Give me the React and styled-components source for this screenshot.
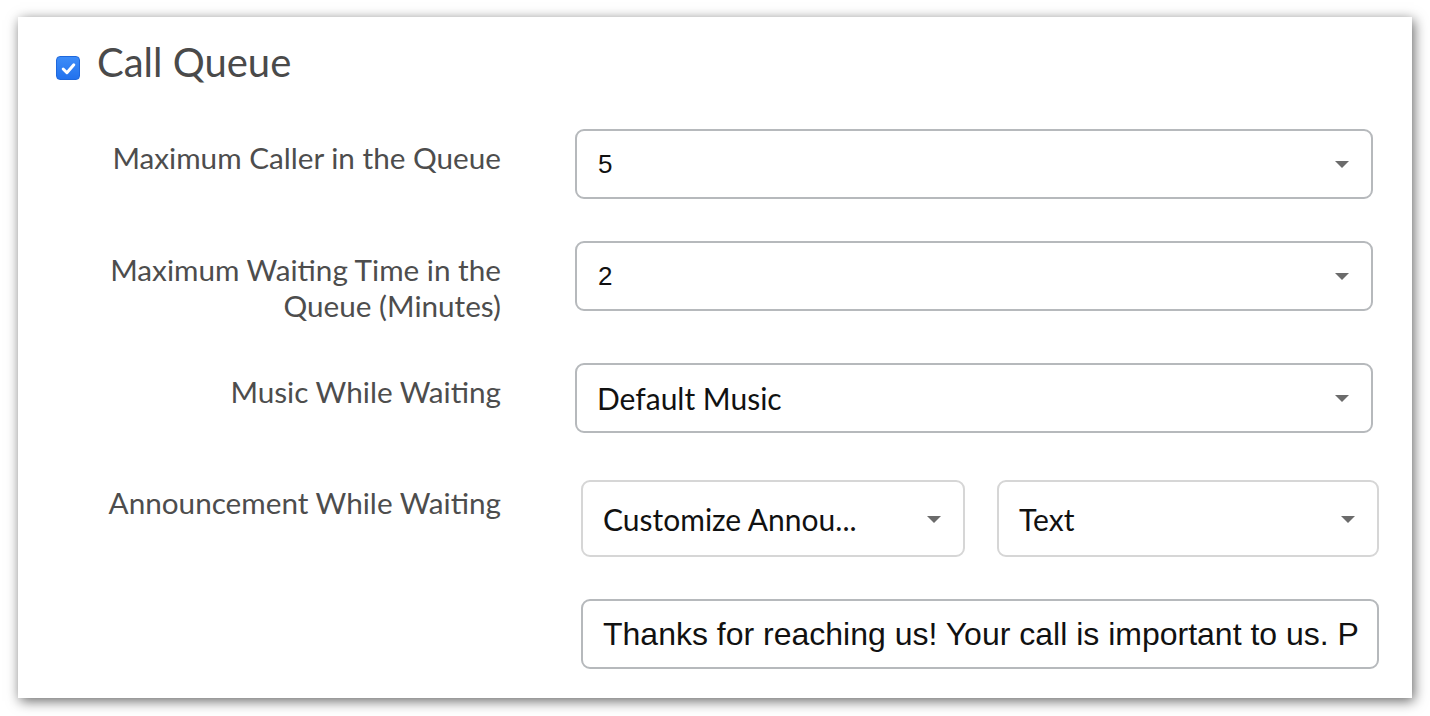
import React from "react";
import styled, { createGlobalStyle } from "styled-components";

const Global = createGlobalStyle`
  html, body { margin: 0; padding: 0; background: #ffffff; }
  body { font-family: Lato, "Open Sans", sans-serif; }
  * { box-sizing: border-box; }
`;

const Page = styled.div`
  width: 1430px;
  height: 716px;
  padding: 17px 18px 0 18px;
  background: #ffffff;
`;

const Card = styled.section`
  width: 1394px;
  height: 681px;
  background: #ffffff;
  box-shadow: 2px 3px 12px rgba(0, 0, 0, 0.6);
  padding: 21px 39px 0 38px;
`;

const TitleRow = styled.label`
  display: flex;
  align-items: flex-start;
  gap: 17px;
  height: 48px;
`;

const Check = styled.span`
  flex: none;
  width: 24px;
  height: 24px;
  border-radius: 4px;
  background: linear-gradient(#3d8cf8, #2272ee);
  border: 1px solid #1f68dc;
  display: flex;
  align-items: center;
  justify-content: center;
  margin-top: 18px;
`;

const Title = styled.h1`
  margin: 0;
  font-family: Lato, sans-serif;
  font-weight: 400;
  font-size: 40px;
  color: #4a4a4a;
  line-height: 48px;
`;

const Form = styled.div`
  display: flex;
  flex-direction: column;
  margin-top: 43px;
`;

const Row = styled.div`
  display: grid;
  grid-template-columns: 445px 798px;
  column-gap: 74px;
  margin-top: ${(p) => p.$gap || 0}px;
`;

const Label = styled.div`
  text-align: right;
  font-family: Lato, sans-serif;
  font-size: 29.7px;
  line-height: 36px;
  color: #4d4d4d;
  padding-top: ${(p) => p.$pt ?? 11}px;
`;

const Controls = styled.div`
  display: flex;
  flex-direction: column;
  gap: 42px;
  margin-left: ${(p) => p.$shift || 0}px;
  margin-right: ${(p) => -(p.$shift || 0)}px;
`;

const Pair = styled.div`
  display: grid;
  grid-template-columns: 384px 382px;
  column-gap: 32px;
`;

const Select = styled.div`
  position: relative;
  height: ${(p) => p.$h || 70}px;
  border: 2px solid ${(p) => (p.$light ? "#d6d6d6" : "#b6b9bc")};
  border-radius: 9px;
  background: #ffffff;
  display: flex;
  align-items: center;
  padding: 0 56px 0 ${(p) => p.$pl || 20}px;
  font-family: ${(p) => (p.$arial ? '"Liberation Sans", Arial, sans-serif' : "Lato, sans-serif")};
  font-size: ${(p) => (p.$arial ? 26 : 30)}px;
  color: #111111;
  white-space: nowrap;
  overflow: hidden;
`;

const Arrow = styled.span`
  position: absolute;
  right: 22px;
  top: 50%;
  margin-top: -3px;
  width: 0;
  height: 0;
  border-left: 7px solid transparent;
  border-right: 7px solid transparent;
  border-top: 7px solid #6b6b6b;
`;

const TextInput = styled.input`
  display: block;
  width: 100%;
  height: 70px;
  margin: 0;
  border: 2px solid #b6b9bc;
  border-radius: 9px;
  background: #ffffff;
  padding: 0 14px 0 20px;
  font-family: "Liberation Sans", Arial, sans-serif;
  font-size: 32px;
  color: #111111;
  outline: none;
`;

const Dropdown = ({ children, ...rest }) => (
  <Select {...rest}>
    {children}
    <Arrow />
  </Select>
);

export default function App() {
  return (
    <>
      <Global />
      <Page>
        <Card>
          <TitleRow>
            <Check>
              <svg width="17" height="17" viewBox="0 0 16 16">
                <path
                  d="M3 8.5 L6.5 12 L13 4.5"
                  fill="none"
                  stroke="#ffffff"
                  strokeWidth="2.8"
                  strokeLinecap="round"
                  strokeLinejoin="round"
                />
              </svg>
            </Check>
            <Title>Call Queue</Title>
          </TitleRow>
          <Form>
            <Row>
              <Label>Maximum Caller in the Queue</Label>
              <Controls>
                <Dropdown $arial $pl={21}>5</Dropdown>
              </Controls>
            </Row>
            <Row $gap={42}>
              <Label>
                Maximum Waiting Time in the
                <br />
                Queue (Minutes)
              </Label>
              <Controls>
                <Dropdown $arial $pl={21}>2</Dropdown>
              </Controls>
            </Row>
            <Row $gap={39}>
              <Label>Music While Waiting</Label>
              <Controls>
                <Dropdown>Default Music</Dropdown>
              </Controls>
            </Row>
            <Row $gap={47}>
              <Label $pt={5}>Announcement While Waiting</Label>
              <Controls $shift={6}>
                <Pair>
                  <Dropdown $light $h={77}>Customize Annou...</Dropdown>
                  <Dropdown $light $h={77}>Text</Dropdown>
                </Pair>
                <TextInput
                  readOnly
                  value="Thanks for reaching us! Your call is important to us. P"
                />
              </Controls>
            </Row>
          </Form>
        </Card>
      </Page>
    </>
  );
}
